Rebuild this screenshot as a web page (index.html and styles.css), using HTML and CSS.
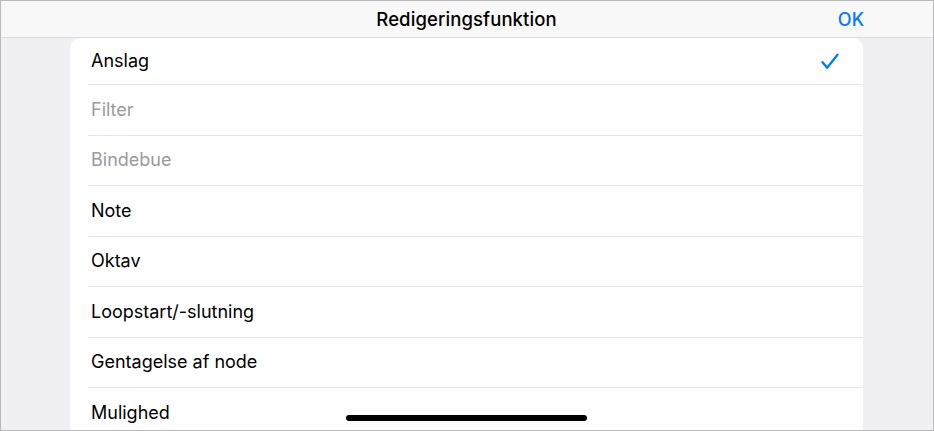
FILE: index.html
```html
<!DOCTYPE html>
<html lang="da">
<head>
<meta charset="utf-8">
<title>Redigeringsfunktion</title>
<link rel="stylesheet" href="styles.css">
</head>
<body>
<div class="screen">
  <header class="navbar">
    <div class="nav-side"></div>
    <div class="nav-title">Redigeringsfunktion</div>
    <div class="nav-side nav-right"><span class="nav-ok">OK</span></div>
  </header>
  <main class="content">
    <ul class="list">
      <li class="row row-first"><span class="label">Anslag</span>
        <svg class="check" width="18" height="17" viewBox="0 0 18 17"><path d="M1.5 9.2 L6.2 14.8 L16.5 1.8" fill="none" stroke="#007aff" stroke-width="2.3" stroke-linecap="round" stroke-linejoin="round"/></svg>
      </li>
      <li class="row"><span class="label label-disabled">Filter</span></li>
      <li class="row"><span class="label label-disabled">Bindebue</span></li>
      <li class="row"><span class="label">Note</span></li>
      <li class="row"><span class="label">Oktav</span></li>
      <li class="row"><span class="label">Loopstart/-slutning</span></li>
      <li class="row"><span class="label">Gentagelse af node</span></li>
      <li class="row"><span class="label">Mulighed</span></li>
    </ul>
  </main>
  <div class="home-indicator"></div>
</div>
</body>
</html>
```

FILE: styles.css
```css
* { box-sizing: border-box; }
html, body { margin: 0; padding: 0; }
body {
  font-family: "Inter", "Roboto", "Liberation Sans", sans-serif;
  background: #ffffff;
}
.screen {
  position: relative;
  width: 934px;
  height: 431px;
  border: 1px solid #b9b9bc;
  overflow: hidden;
  background: #efeff4;
  display: flex;
  flex-direction: column;
}
.navbar {
  flex: 0 0 37px;
  height: 37px;
  background: #f8f8f8;
  border-bottom: 1px solid #dcdcde;
  display: flex;
  align-items: center;
  padding: 0 70px 0 69px;
}
.nav-side { flex: 1; }
.nav-right { display: flex; justify-content: flex-end; }
.nav-title {
  font-size: 18.5px;
  font-weight: 500;
  color: #000;
  letter-spacing: 0.1px;
}
.nav-ok {
  font-size: 18px;
  font-weight: 500;
  color: #007aff;
  margin-right: -1px;
}
.content {
  flex: 1;
  padding: 0 70px 0 69px;
}
.list {
  list-style: none;
  margin: 0;
  padding: 0;
  background: #fff;
  border-radius: 10px 10px 0 0;
}
.row {
  position: relative;
  height: 50.5px;
  display: flex;
  align-items: center;
  margin-left: 18px;
  padding-left: 3px;
  padding-right: 24px;
  border-top: 1px solid #e4e4e7;
}
.row-first {
  height: 46px;
  border-top: none;
}
.label {
  flex: 1;
  font-size: 18px;
  color: #000;
  letter-spacing: 0;
  margin-top: -1px;
}
.label-disabled { color: #9a9a9e; }
.check { display: block; flex: 0 0 auto; }
.home-indicator {
  position: absolute;
  left: 345px;
  top: 414px;
  width: 241px;
  height: 6px;
  border-radius: 3px;
  background: #000;
}
```
